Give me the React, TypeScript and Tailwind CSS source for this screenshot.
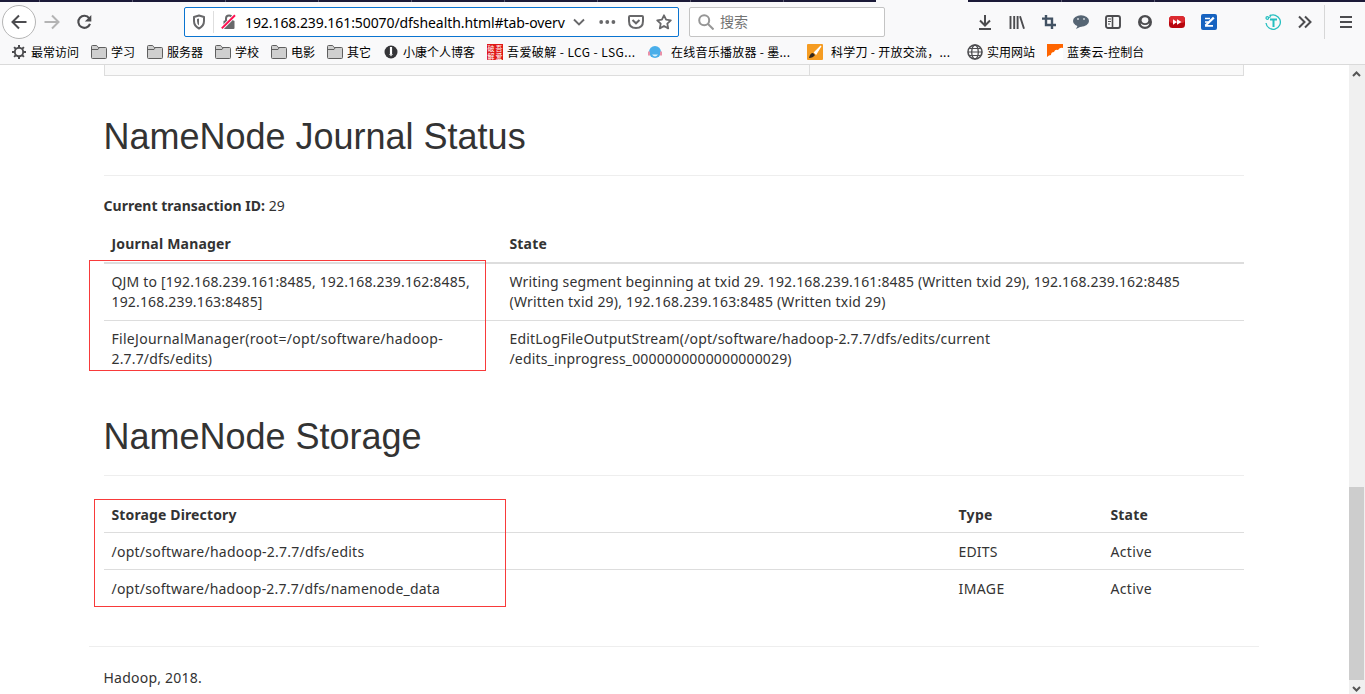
import React from "react";

const G = "#4c4c4f";

function Svg({ w = 16, h, children, className = "" }: { w?: number; h?: number; children: React.ReactNode; className?: string }) {
  return (
    <svg width={w} height={h ?? w} viewBox={`0 0 ${w} ${h ?? w}`} fill="none" className={"block shrink-0 " + className}>
      {children}
    </svg>
  );
}

const Folder = () => (
  <Svg>
    <path d="M.5 13.5v-11q0-1 1-1h3.7q.8 0 1.2.8l.8 1.2h7.3q1 0 1 1v9q0 1-1 1h-13q-1 0-1-1z" fill="#cfcfcf" stroke="#5f5f5f" />
    <path d="M1 5.5h6l1-1.5" stroke="#5f5f5f" />
  </Svg>
);

const Gear = () => (
  <Svg>
    <circle cx="8" cy="8" r="4.2" stroke={G} strokeWidth="1.9" />
    <path d="M8 1v3M8 12v3M1 8h3M12 8h3M3.1 3.1l2 2M10.9 10.9l2 2M3.1 12.9l2-2M10.9 5.1l2-2" stroke={G} strokeWidth="2" />
  </Svg>
);

function Bookmark({ icon, label, className = "", gap = "gap-1" }: { icon: React.ReactNode; label: string; className?: string; gap?: string }) {
  return (
    <div className={"flex shrink-0 items-center " + gap + " " + className}>
      {icon}
      <span className="whitespace-nowrap">{label}</span>
    </div>
  );
}

function TabStrip() {
  return (
    <div className="flex h-[2px]">
      <div className="flex w-[876px] bg-[#1b1a38]">
        <div className="w-10 border-r border-[#5a5970]" />
        {[0, 1, 2, 3, 4, 5, 6, 7].map((i) => (
          <div key={i} className="w-[93px] border-r border-[#5a5970]" />
        ))}
      </div>
      <div className="w-[92px]" />
      <div className="flex flex-1 bg-[#1b1a38]">
        <div className="w-[94px] border-r border-[#5a5970]" />
        <div className="w-[93px] border-r border-[#5a5970]" />
      </div>
    </div>
  );
}

function Toolbar() {
  return (
    <div className="mt-px flex h-[38px] items-center pl-[2px]">
      <div className="flex w-[182px] items-center">
        <div className="flex h-[34px] w-[34px] items-center justify-center rounded-full border border-[#b5b5b5] bg-white">
          <Svg><path d="M15.5 8H1.5M8 1.5L1.5 8 8 14.5" stroke={G} strokeWidth="2" /></Svg>
        </div>
        <Svg className="ml-2"><path d="M.5 8h14M8 1.5L14.5 8 8 14.5" stroke="#b4b4b4" strokeWidth="2" /></Svg>
        <Svg className="ml-4"><path d="M13.2 4.3A6 6 0 1 0 14 9.8" stroke={G} strokeWidth="2.1" /><path d="M15.3 1v6.5H8.8z" fill={G} /></Svg>
      </div>
      <div className="flex h-[30px] w-[495px] items-center rounded-[2px] border border-[#0a74d0] bg-white">
        <Svg className="ml-[6px]"><path d="M8 1.5L13 3v4q0 5-5 7.5Q3 12 3 7V3z" stroke="#68686a" strokeWidth="2" strokeLinejoin="round" /><path d="M8 4.5v7Q6 10 6 7V5z" fill="#68686a" /></Svg>
        <div className="ml-[6px] h-[22px] w-px bg-[#dedede]" />
        <Svg className="ml-[7px]"><path d="M5 7V4.6a3 3 0 0 1 6 0V7" stroke="#68686a" strokeWidth="2" /><rect x="2.5" y="6.5" width="11" height="8.5" rx="1" fill="#68686a" /><path d="M.8 14.4L14 1.2" stroke="#fff" strokeWidth="3.6" /><path d="M.8 14.4L14 1.2" stroke="#ff0f50" strokeWidth="2" /></Svg>
        <div className="ml-[8px] w-[321px] whitespace-nowrap font-['Noto_Sans',sans-serif] text-[14px] tracking-[-0.08px] text-black">192.168.239.161:50070/dfshealth.html#tab-overv</div>
        <Svg w={12} className="ml-[7px]"><path d="M1 3.5l5 5 5-5" stroke="#68686a" strokeWidth="1.9" /></Svg>
        <Svg w={17} h={16} className="ml-[14px]"><circle cx="2.2" cy="8" r="1.9" fill="#68686a" /><circle cx="8.3" cy="8" r="1.9" fill="#68686a" /><circle cx="14.4" cy="8" r="1.9" fill="#68686a" /></Svg>
        <Svg className="ml-[12px]"><path d="M2 2h12q1 0 1 1v4q0 7-7 7T1 7V3q0-1 1-1z" stroke="#68686a" strokeWidth="2" /><path d="M4.5 6L8 9.3 11.5 6" stroke="#68686a" strokeWidth="2" /></Svg>
        <Svg className="ml-[12px]"><path d="M8 1.3l2.1 4.4 4.7.6-3.5 3.3.9 4.8L8 12l-4.2 2.4.9-4.8L1.2 6.3l4.7-.6z" stroke="#68686a" strokeWidth="1.8" strokeLinejoin="round" /></Svg>
      </div>
      <div className="ml-[10px] flex h-[30px] w-[196px] items-center rounded-[2px] border border-[#c4c4c4] bg-white text-[14px] text-[#737373]">
        <Svg className="ml-[8px]"><circle cx="6.2" cy="6.2" r="5" stroke="#969696" strokeWidth="2" /><path d="M10 10l5.5 5.5" stroke="#969696" strokeWidth="2" /></Svg>
        <span className="-mt-[2px] ml-[6px]">搜索</span>
      </div>
      <div className="ml-[92px] flex items-center gap-4">
        <Svg><path d="M8 1v10M3 6.5l5 5 5-5M2 15h12" stroke={G} strokeWidth="2" /></Svg>
        <Svg><path d="M1.5 2v13M5.2 2v13M8.6 2v13M11 2.3l4 12.5" stroke={G} strokeWidth="1.9" /></Svg>
        <Svg><path d="M5 1v10h10M1 4.6h10V15" stroke="#425263" strokeWidth="2.4" /></Svg>
        <Svg><ellipse cx="8" cy="7" rx="8" ry="5.8" fill="#566573" /><path d="M5 11l-2 4 6-3z" fill="#566573" /><circle cx="5" cy="5" r="1" fill="#ccd3d9" /><circle cx="11" cy="5" r="1" fill="#ccd3d9" /></Svg>
        <Svg><rect x="1" y="2" width="14" height="12" rx="2" stroke={G} strokeWidth="1.9" /><path d="M7.5 2v12" stroke={G} strokeWidth="1.6" /><path d="M3 5h3M3 7.5h3M3 10h2" stroke={G} strokeWidth="1.1" /></Svg>
        <Svg><circle cx="8" cy="8" r="7" fill={G} /><path d="M5 4.6Q8 2 11 4.6q1 2-.3 3.6Q8 10.4 5.3 8.2 4 6.6 5 4.6z" fill="#f9f9fa" /><path d="M3.6 9.2Q8 13 12.4 9.2 11.5 12.8 8 12.8T3.6 9.2z" fill="#f9f9fa" /></Svg>
        <Svg><rect y="2" width="16" height="12" rx="3.5" fill="#b8060e" /><rect y="2" width="16" height="7" rx="3.5" fill="#dc2a30" /><path d="M4 5.2l4 2.8-4 2.8zM8 5.2L12.5 8 8 10.8z" fill="#fff" /></Svg>
        <Svg><rect width="16" height="16" rx="2" fill="#1763c0" /><path d="M4 4.5h5M4 8h3.5M4 11.800h8" stroke="#fff" strokeWidth="1.7" /><path d="M4.500 11.500L12.800 3.600" stroke="#fff" strokeWidth="2.2" /></Svg>
      </div>
      <Svg className="ml-12"><path d="M4.5 1.9A7.2 7.2 0 1 1 1 9" stroke="#25bfc0" strokeWidth="1.3" /><path d="M5 5.5h7M8.500 5.500V13" stroke="#25bfc0" strokeWidth="2" /><circle cx="2.3" cy="4" r="1.3" stroke="#25bfc0" strokeWidth="1.2" /><path d="M3.5 3.700L6 2.500" stroke="#25bfc0" strokeWidth="1.2" /></Svg>
      <Svg className="ml-4"><path d="M2 2.5L7.5 8 2 13.5M8 2.5L13.5 8 8 13.5" stroke={G} strokeWidth="2" /></Svg>
      <div className="ml-[11px] h-[34px] w-px bg-[#d7d7d7]" />
      <Svg className="ml-[13px]"><path d="M2 3h12M2 8h12M2 13h12" stroke={G} strokeWidth="2" /></Svg>
    </div>
  );
}

function Bookmarks() {
  return (
    <div className="-mt-px flex h-6 items-center pl-[11px] text-[12px] text-black">
      <Bookmark icon={<Gear />} label="最常访问" className="w-20" />
      <Bookmark icon={<Folder />} label="学习" className="w-14" />
      <Bookmark icon={<Folder />} label="服务器" className="w-[68px]" />
      <Bookmark icon={<Folder />} label="学校" className="w-14" />
      <Bookmark icon={<Folder />} label="电影" className="w-14" />
      <Bookmark icon={<Folder />} label="其它" className="w-14" />
      <Bookmark icon={<Svg><circle cx="8" cy="8" r="6.5" fill="#353538" /><path d="M8 3v7" stroke="#fff" strokeWidth="2.2" /><path d="M6 10l2 2.5 2-2.5z" fill="#ddd" /></Svg>} label="小康个人博客" className="w-[104px]" />
      <Bookmark
        icon={<div className="grid h-4 w-4 grid-cols-2 overflow-hidden bg-[#e01818] text-center text-[7px] leading-[8px] tracking-normal text-white"><span>破</span><span>吾</span><span>解</span><span>爱</span></div>}
        label="吾爱破解 - LCG - LSG..." className="w-40 tracking-[0.42px]" />
      <Bookmark gap="gap-2" icon={<Svg><circle cx="8" cy="8" r="6" fill="#49aeea" /><path d="M2 7.5v4M14 7.5v4" stroke="#e990a8" strokeWidth="2" /><path d="M5 10.5q3 4 6 0" fill="#d8f1fc" /></Svg>} label="在线音乐播放器 - 墨..." className="w-40 tracking-[0.27px]" />
      <Bookmark gap="gap-2" icon={<Svg><rect width="16" height="16" rx="1" fill="#f59c22" /><path d="M7.5 8.5L14 2 9 10z" fill="#fff" stroke="#fff" strokeWidth="1.2" /><path d="M2 14q1-5 4-5l2 2q-2 3-6 3z" fill="#33281e" /></Svg>} label="科学刀 - 开放交流，..." className="w-40 tracking-[0.27px]" />
      <Bookmark icon={<Svg><circle cx="8" cy="8" r="7" stroke={G} strokeWidth="1.6" /><ellipse cx="8" cy="8" rx="3.3" ry="7" stroke={G} strokeWidth="1.3" /><path d="M1 8h14M2.5 4.5h11M2.5 11.5h11" stroke={G} strokeWidth="1.2" /></Svg>} label="实用网站" className="w-20" />
      <Bookmark icon={<Svg><rect width="16" height="16" fill="#fff" /><path d="M0 0h16v4q-3-1-5 2-3-1-4 2-3 0-3 3-2 0-4 2z" fill="#ff6500" /></Svg>} label="蓝奏云-控制台" className="tracking-[0.2px]" />
    </div>
  );
}

export default function App() {
  return (
    <div className="flex h-[694px] w-[1365px] flex-col overflow-hidden bg-white font-['Noto_Sans','Noto_Sans_CJK_SC',sans-serif]">
      <header className="h-[65px] shrink-0 border-b border-[#dadada] bg-[#f9f9fa] font-['Noto_Sans_CJK_SC',sans-serif]">
        <TabStrip />
        <Toolbar />
        <Bookmarks />
      </header>
      <div className="flex min-h-0 flex-1">
        <main className="relative w-[1349px] overflow-hidden px-[104px] text-[14px] leading-5 tracking-[0.16px] text-[#333]">
          <div className="flex h-[11px] w-[1140px] border-x border-b border-[#ddd] bg-[#f9f9f9]">
            <div className="w-[705px] border-r border-[#ddd]" />
          </div>
          <div className="h-[100px] w-[1140px] border-b border-[#eee] pt-[41px] indent-[-0.6px] font-['Liberation_Sans',sans-serif] text-[36px] leading-10 tracking-normal">NameNode Journal Status</div>
          <p className="mt-5 h-[30px] indent-[-0.5px] tracking-[0.02px]"><b>Current transaction ID:</b> 29</p>
          <table className="w-[1140px] table-fixed border-collapse text-left">
            <colgroup><col className="w-[398px]" /><col /></colgroup>
            <thead><tr className="h-[37px] border-b-2 border-[#ddd]"><th className="pl-[7.5px] tracking-[0.2px]">Journal Manager</th><th className="pl-[7.5px]">State</th></tr></thead>
            <tbody>
              <tr className="border-b border-[#ddd]">
                <td className="py-2 pl-[7.5px]">QJM to [192.168.239.161:8485, 192.168.239.162:8485,<br />192.168.239.163:8485]</td>
                <td className="py-2 pl-[7.5px]">Writing segment beginning at txid 29. 192.168.239.161:8485 (Written txid 29), 192.168.239.162:8485<br /><span className="tracking-[0.2px]">(Written txid 29), 192.168.239.163:8485 (Written txid 29)</span></td>
              </tr>
              <tr>
                <td className="py-2 pl-[7.5px] tracking-[0.29px]">FileJournalManager(root=/opt/software/hadoop-<br /><span className="tracking-[0.16px]">2.7.7/dfs/edits)</span></td>
                <td className="py-2 pl-[7.5px] tracking-[0.19px]">EditLogFileOutputStream(/opt/software/hadoop-2.7.7/dfs/edits/current<br /><span className="tracking-[0.16px]">/edits_inprogress_0000000000000000029)</span></td>
              </tr>
            </tbody>
          </table>
          <div className="h-[99px] w-[1140px] border-b border-[#eee] pt-[40px] indent-[-0.6px] font-['Liberation_Sans',sans-serif] text-[36px] leading-10 tracking-normal">NameNode Storage</div>
          <table className="mt-5 w-[1140px] table-fixed border-collapse text-left">
            <colgroup><col className="w-[847px]" /><col className="w-[152px]" /><col /></colgroup>
            <tbody>
              <tr className="h-[36px] border-b border-[#ddd]"><th className="pl-[7.5px] pt-[3px] tracking-[0.13px]">Storage Directory</th><th className="pl-[7.5px] pt-[3px] tracking-[0.3px]">Type</th><th className="pl-[7.5px] pt-[3px]">State</th></tr>
              <tr className="h-[37px] border-b border-[#ddd]"><td className="pl-[7.5px] pt-[2px] tracking-[0.24px]">/opt/software/hadoop-2.7.7/dfs/edits</td><td className="pl-[7.5px] pt-[2px]">EDITS</td><td className="pl-[7.5px] pt-[2px] tracking-[0.35px]">Active</td></tr>
              <tr className="h-[38px]"><td className="pl-[7.5px] pt-[2px] tracking-[0.22px]">/opt/software/hadoop-2.7.7/dfs/namenode_data</td><td className="pl-[7.5px] pt-[2px] tracking-[0.4px]">IMAGE</td><td className="pl-[7.5px] pt-[2px] tracking-[0.35px]">Active</td></tr>
            </tbody>
          </table>
          <footer className="-mx-[15px] mt-[39px] w-[1170px] border-t border-[#eee] px-[15px] pt-[21px] indent-[-0.5px] tracking-[0.22px]">Hadoop, 2018.</footer>
          <div className="absolute left-[89px] top-[195px] h-[111px] w-[397px] border border-[#f83a3a]" />
          <div className="absolute left-[94px] top-[434px] h-[108px] w-[412px] border border-[#f83a3a]" />
        </main>
        <aside className="flex w-4 flex-col items-center bg-[#f0f0f0]">
          <Svg w={9} className="mt-[5px] mr-px"><path d="M1 6l3.5-3.5L8 6" stroke="#555" strokeWidth="2" /></Svg>
          <div className="mt-[408px] h-[193px] w-[15px] self-start bg-[#cdcdcd]" />
          <Svg w={9} className="mt-[4px] mr-px"><path d="M1 3l3.5 3.5L8 3" stroke="#555" strokeWidth="2" /></Svg>
        </aside>
      </div>
    </div>
  );
}
